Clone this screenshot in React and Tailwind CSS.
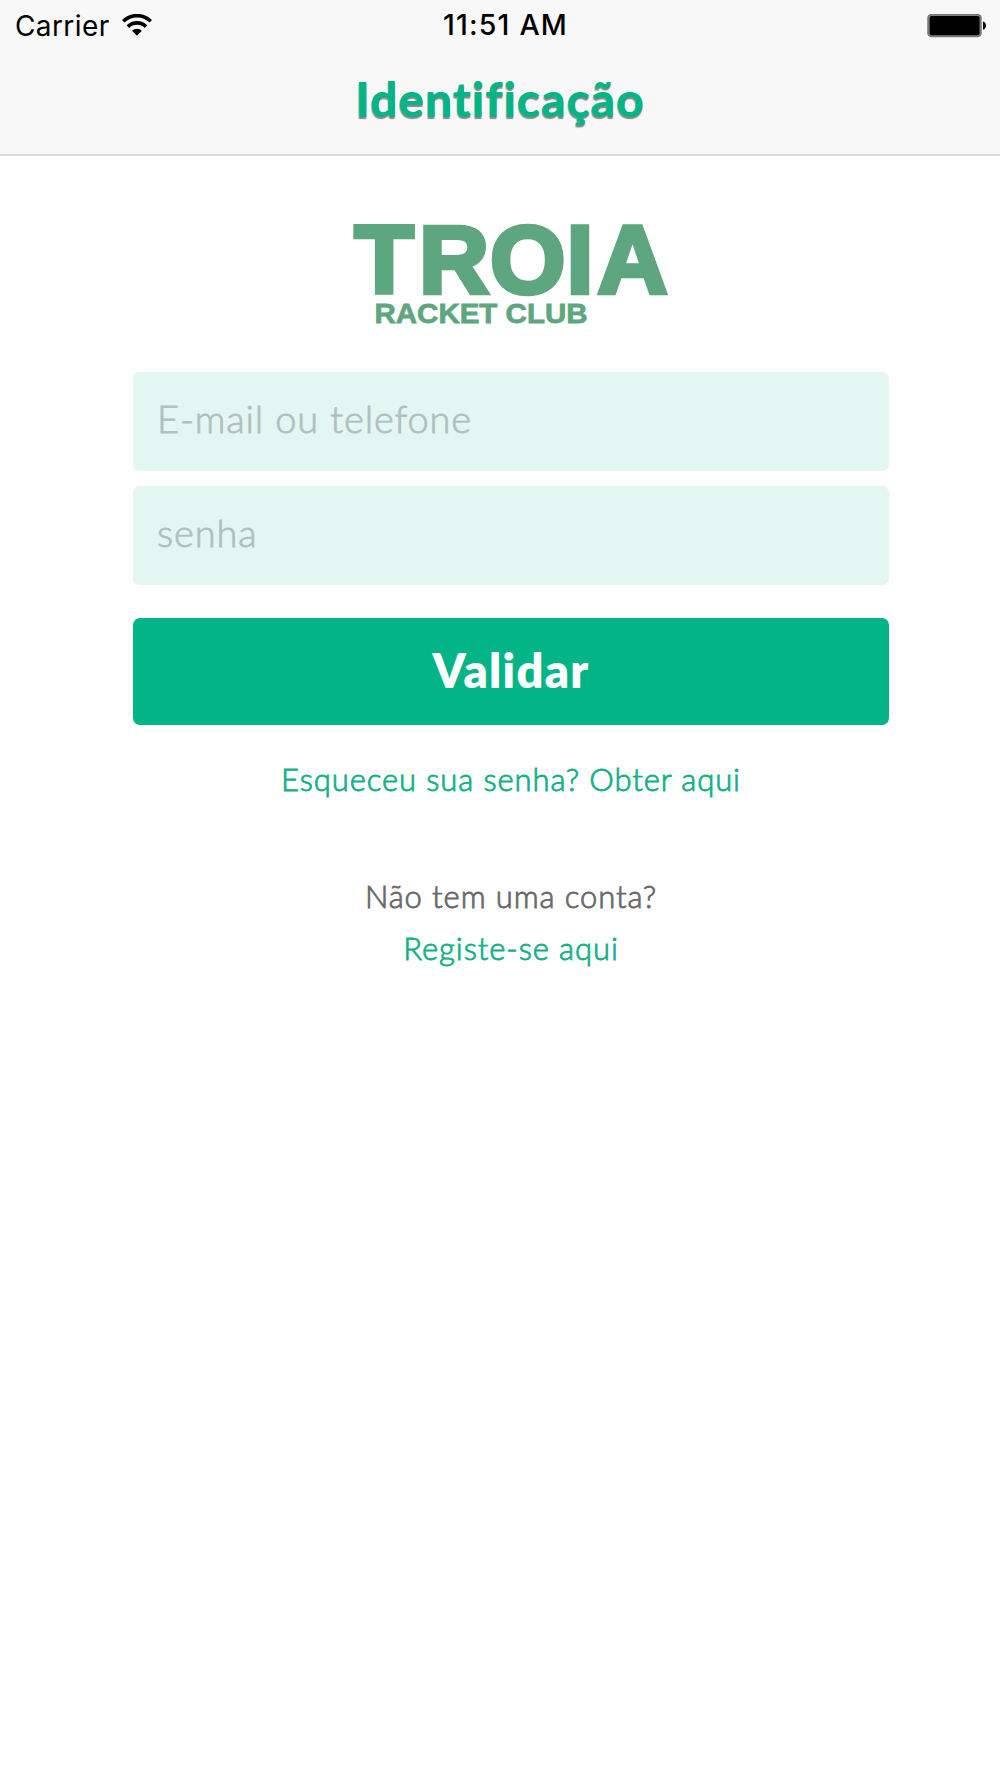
function WifiIcon() {
  return (
    <svg className="ml-[12px] h-[23px] w-[30px]" viewBox="0 0 30 23" fill="none" stroke="#000" strokeWidth="3.6">
      <path d="M1.2 7.3a19.6 19.6 0 0 1 27.6 0" />
      <path d="M5.900 12.600a13 13 0 0 1 18.200 0" />
      <path d="M15 21.700l-4.900-5a6.900 6.900 0 0 1 9.800 0z" fill="#000" stroke="none" />
    </svg>
  );
}

function BatteryIcon() {
  return (
    <svg className="h-[24px] w-[60px]" viewBox="0 0 60 24">
      <rect x="1" y="0.600" width="53" height="22" rx="3.5" fill="#888" stroke="#777" strokeWidth="1.5" />
      <rect x="2.600" y="2" width="50" height="19.200" rx="2" fill="#000" />
      <path d="M56 7.500c4 .6 4 7.600 0 8.200z" fill="#000" />
    </svg>
  );
}

function Logo() {
  return (
    <svg
      className="ml-[354px] h-[104px] w-[316px] overflow-visible"
      viewBox="0 0 316 104"
      fill="#5ea680"
      stroke="#5ea680"
      fontFamily="'Liberation Sans', Arial, sans-serif"
      fontWeight="700"
    >
      <text y="71" x="0.500 65 136 212.500 243.500" fontSize="97" strokeWidth="4.500">TROIA</text>
      <text x="20.500" y="101" fontSize="28.500" textLength="213" lengthAdjust="spacingAndGlyphs" strokeWidth="0.8">
        RACKET CLUB
      </text>
    </svg>
  );
}

const fieldClass =
  "block h-[99px] w-full rounded-[7px] bg-[#e3f6f2] pb-[8px] pl-[24px] text-[38px] font-light tracking-[0.850px] text-gray-700 outline-none placeholder:text-[#b0c0c2] placeholder:[-webkit-text-stroke:0.800px_#b0c0c2]";

export default function App() {
  return (
    <div className="flex h-[1778px] w-[1000px] flex-col overflow-hidden bg-white font-[Lato,sans-serif]">
      <header className="h-[156px] border-b-2 border-[#dcdcdc] bg-[#f8f8f8]">
        <div className="grid h-[51px] grid-cols-3 items-center font-[Inter,sans-serif] text-[28px] leading-none text-black">
          <div className="flex items-center pl-[15px]">
            <span className="tracking-[0.400px]">Carrier</span>
            <WifiIcon />
          </div>
          <div className="pl-[11px] text-center font-medium text-[28.500px] tracking-[1.200px]">11:51 AM</div>
          <div className="flex justify-end pr-[13px]">
            <BatteryIcon />
          </div>
        </div>
        <h1 className="h-[95px] text-center text-[48px] font-black leading-[95px] tracking-[0.900px] text-[#03b487] [text-shadow:0_2px_1px_#888]">
          Identificação
        </h1>
      </header>
      <main className="pt-[66px]">
        <Logo />
        <form className="ml-[133px] mt-[46px] flex w-[756px] flex-col">
          <input className={fieldClass} placeholder="E-mail ou telefone" />
          <input className={`${fieldClass} mt-[15px]`} placeholder="senha" />
          <button
            type="button"
            className="mt-[33px] h-[107px] rounded-[7px] bg-[#03b487] pb-[3px] text-[47px] font-extrabold tracking-[1.300px] text-white"
          >
            Validar
          </button>
        </form>
        <div className="ml-[133px] flex w-[756px] flex-col items-center pt-[28px] text-[31px] font-light leading-[52px] tracking-[0.900px] text-[#14b087] [-webkit-text-stroke:0.850px_currentColor]">
          <a>Esqueceu sua senha? Obter aqui</a>
          <p className="mt-[65px] text-[#6a6a6a]">Não tem uma conta?</p>
          <a>Registe-se aqui</a>
        </div>
      </main>
    </div>
  );
}
